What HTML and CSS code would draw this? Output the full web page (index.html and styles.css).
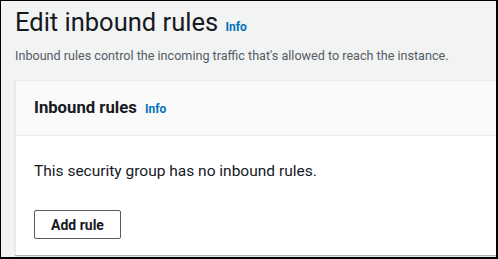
FILE: index.html
```html
<!DOCTYPE html>
<html lang="en">
<head>
    <meta charset="UTF-8">
    <meta name="viewport" content="width=device-width, initial-scale=1.0">
    <title>Edit inbound rules</title>
    <link rel="stylesheet" href="styles.css">
</head>
<body>
<div class="frame">
    <div class="page-header">
        <h1 class="title">Edit inbound rules <a class="info" href="#">Info</a></h1>
        <p class="subtitle">Inbound rules control the incoming traffic that's allowed to reach the instance.</p>
    </div>
    <div class="panel">
        <div class="panel-header">
            <h2 class="panel-title">Inbound rules <a class="info" href="#">Info</a></h2>
        </div>
        <div class="panel-body">
            <p class="empty">This security group has no inbound rules.</p>
            <button class="btn">Add rule</button>
        </div>
    </div>
</div>
</body>
</html>
```

FILE: styles.css
```css
body, html {
    margin: 0;
    padding: 0;
    font-family: Roboto, 'Noto Sans', Arial, sans-serif;
    color: #16191f;
}
.frame {
    width: 498px;
    height: 259px;
    box-sizing: border-box;
    border-style: solid;
    border-color: #000;
    border-width: 1px 2px 2px 1px;
    background-color: #f2f3f3;
    overflow: hidden;
    padding: 0 0 0 14px;
}
.page-header {
    padding-top: 4px;
}
.title {
    margin: 0;
    font-size: 25.5px;
    font-weight: 400;
    line-height: 34px;
}
.info {
    font-size: 12px;
    font-weight: 700;
    color: #0073bb;
    text-decoration: none;
    margin-left: 1px;
}
.subtitle {
    margin: 2px 0 0 0;
    font-size: 12.6px;
    line-height: 20px;
    color: #545b64;
    white-space: nowrap;
}
.panel {
    margin-top: 14px;
    background-color: #fff;
    border-left: 1px solid #eaeded;
    border-top: 1px solid #eaeded;
    box-shadow: 0 1px 1px 0 rgba(0, 28, 36, 0.3);
}
.panel-header {
    background-color: #fafafa;
    border-bottom: 1px solid #eaeded;
    height: 54px;
    display: flex;
    align-items: center;
    padding-left: 18px;
}
.panel-title {
    margin: 0;
    font-size: 16.7px;
    font-weight: 700;
    line-height: 22px;
}
.panel-title .info {
    margin-left: 4px;
}
.panel-body {
    padding: 25px 18px 16px 18px;
}
.empty {
    margin: 0 0 29px 0;
    font-size: 15.5px;
    line-height: 20px;
}
.btn {
    font-family: inherit;
    font-size: 14px;
    font-weight: 700;
    color: #16191f;
    background-color: #fff;
    border: 1px solid #545b64;
    border-radius: 2px;
    width: 87px;
    height: 29px;
    padding: 0;
}
```
